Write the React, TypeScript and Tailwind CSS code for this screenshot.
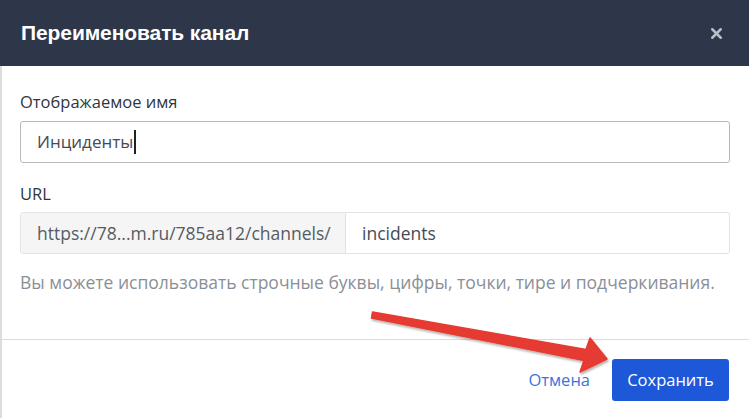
import { X } from 'lucide-react'

export default function App() {
  return (
    <div className="relative w-[749px] h-[418px] overflow-hidden bg-white font-['Open_Sans',sans-serif]">
      {/* Header */}
      <div className="h-[66px] bg-[#2e3749] flex items-center justify-between pl-[21px] pr-[24px]">
        <h3 className="text-[21px] font-bold text-white font-['Liberation_Sans',Arial,sans-serif] tracking-[-0.1px]">
          Переименовать канал
        </h3>
        <X className="w-[17px] h-[17px] text-[#b8bfca]" strokeWidth={3.5} />
      </div>

      {/* Body */}
      <div className="border-l-2 border-[#dddddd] h-[352px] flex flex-col">
        <div className="pl-[18px] pr-[19px] pt-[25px]">
          <label className="block text-[16.5px] leading-[22px] font-medium text-[#2f3640] mb-[8px]">
            Отображаемое имя
          </label>
          <div className="h-[42px] border border-[#b9b9b9] rounded-[3px] flex items-center pl-[16px] text-[17px] text-[#444b55]">
            Инциденты<span className="w-[2px] h-[24px] bg-[#222] ml-[1px]" />
          </div>

          <label className="block text-[16.5px] leading-[22px] font-medium text-[#2f3640] mt-[20px] mb-[7px]">
            URL
          </label>
          <div className="h-[42px] flex border border-[#e3e3e3] rounded-[3px] overflow-hidden">
            <div className="w-[325px] bg-[#f5f5f5] border-r border-[#e3e3e3] flex items-center pl-[16px] text-[17.5px] text-[#555b63]">
              https://78...m.ru/785aa12/channels/
            </div>
            <div className="flex-1 flex items-center pl-[16px] text-[17.5px] text-[#444b55]">incidents</div>
          </div>

          <p className="mt-[17px] text-[17.5px] leading-[22px] text-[#8a8f96]">
            Вы можете использовать строчные буквы, цифры, точки, тире и подчеркивания.
          </p>
        </div>

        <div className="mt-[46px] border-t border-[#dcdcdc]" />

        <div className="flex items-center justify-end gap-[22px] pr-[20px] pt-[19px]">
          <button className="text-[16.5px] text-[#3b74e0]">Отмена</button>
          <button className="h-[42px] w-[117px] rounded-[3px] bg-[#1d58d8] text-white text-[16.5px]">
            Сохранить
          </button>
        </div>
      </div>

      {/* Annotation arrow */}
      <svg className="absolute inset-0 pointer-events-none" width="749" height="418" viewBox="0 0 749 418">
        <defs>
          <filter id="sh" x="-10%" y="-10%" width="120%" height="140%">
            <feDropShadow dx="1" dy="2" stdDeviation="1.2" floodColor="#000" floodOpacity="0.3" />
          </filter>
        </defs>
        <polygon
          points="372.5,312 586,349.5 590,338 607,359 580,372 584,360.5 371.5,318"
          fill="#e53b30"
          stroke="#e53b30"
          strokeWidth="1.5"
          strokeLinejoin="round"
          filter="url(#sh)"
        />
      </svg>
    </div>
  )
}
